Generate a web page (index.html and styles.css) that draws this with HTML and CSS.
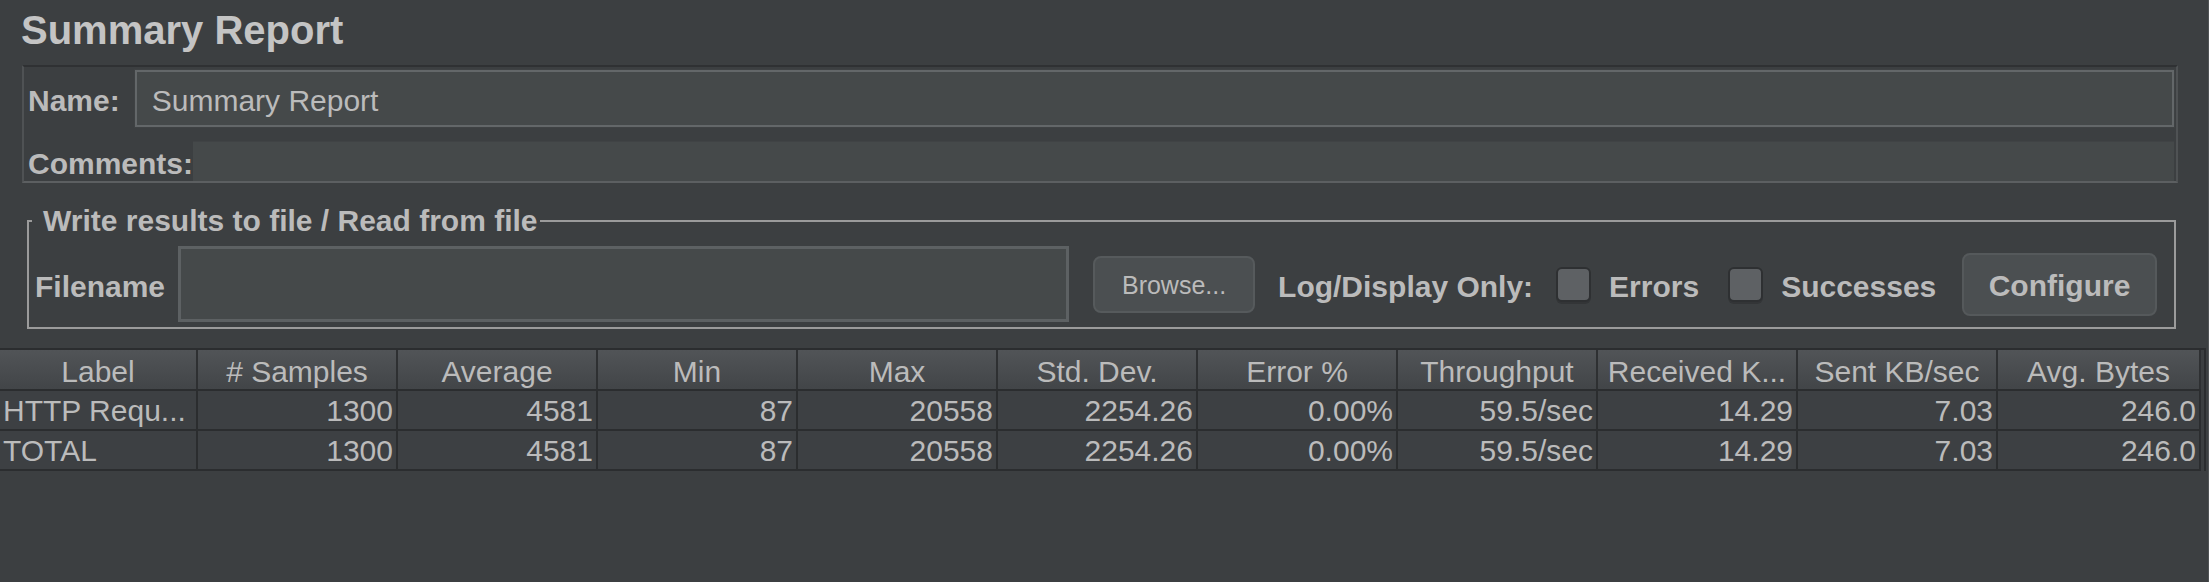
FILE: index.html
```html
<!DOCTYPE html>
<html>
<head>
<meta charset="utf-8">
<title>Summary Report</title>
<link rel="stylesheet" href="styles.css">
</head>
<body>
<div class="app">
  <h1 class="title">Summary Report</h1>

  <div class="name-panel">
    <div class="row name-row">
      <span class="lbl name-lbl">Name:</span>
      <div class="field name-field">Summary Report</div>
    </div>
    <div class="row comments-row">
      <span class="lbl">Comments:</span>
      <div class="field comments-field"></div>
    </div>
  </div>

  <fieldset class="group">
    <legend class="group-title">Write results to file / Read from file</legend>
    <div class="group-row">
      <span class="lbl file-lbl">Filename</span>
      <div class="field file-field"></div>
      <button class="btn browse">Browse...</button>
      <span class="lbl log-lbl">Log/Display Only:</span>
      <span class="box box-errors"></span>
      <span class="lbl check-lbl">Errors</span>
      <span class="box box-success"></span>
      <span class="lbl check-lbl">Successes</span>
      <button class="btn configure">Configure</button>
    </div>
  </fieldset>

  <div class="table-wrap">
    <table class="results">
      <colgroup>
        <col class="c-first"><col class="c"><col class="c"><col class="c"><col class="c"><col class="c"><col class="c"><col class="c"><col class="c"><col class="c"><col class="c-last">
      </colgroup>
      <thead>
        <tr>
          <th>Label</th><th># Samples</th><th>Average</th><th>Min</th><th>Max</th><th>Std. Dev.</th><th>Error %</th><th>Throughput</th><th>Received K...</th><th>Sent KB/sec</th><th>Avg. Bytes</th>
        </tr>
      </thead>
      <tbody>
        <tr>
          <td class="txt">HTTP Requ...</td><td>1300</td><td>4581</td><td>87</td><td>20558</td><td>2254.26</td><td>0.00%</td><td>59.5/sec</td><td>14.29</td><td>7.03</td><td>246.0</td>
        </tr>
        <tr>
          <td class="txt">TOTAL</td><td>1300</td><td>4581</td><td>87</td><td>20558</td><td>2254.26</td><td>0.00%</td><td>59.5/sec</td><td>14.29</td><td>7.03</td><td>246.0</td>
        </tr>
      </tbody>
    </table>
  </div>
</div>
</body>
</html>
```

FILE: styles.css
```css
* { box-sizing: border-box; }

html, body {
  margin: 0;
  padding: 0;
  background: #3c3f41;
}

body {
  width: 2209px;
  height: 582px;
  overflow: hidden;
  font-family: "Liberation Sans", Arial, sans-serif;
  color: #bbbbbb;
}

.app {
  height: 582px;
  border-right: 1px solid #505355;
}

.title {
  margin: 0;
  padding: 10px 0 0 21px;
  height: 49px;
  font-size: 40px;
  line-height: 40px;
  font-weight: bold;
  color: #c4c4c4;
}

.lbl {
  font-size: 30px;
  line-height: 34px;
  padding-top: 5px;
  font-weight: bold;
  color: #bbbbbb;
  white-space: nowrap;
}

.field {
  background: #45494a;
}

/* Name / Comments panel */
.name-panel {
  margin: 16px 30px 0 22px;
  border: 2px solid #4f5254;
  border-top-color: #2f3133;
  border-bottom-color: #5c5f61;
  padding: 3px 2px 0 4px;
}

.row {
  display: flex;
  align-items: center;
}

.name-row {
  height: 57px;
}

.name-lbl {
  margin-right: 15px;
}

.name-field {
  flex: 1;
  height: 57px;
  border: 2px solid #636769;
  box-shadow: 0 0 0 1px #3f4244;
  padding: 5px 0 0 15px;
  font-size: 30px;
  line-height: 48px;
  color: #bbbbbb;
}

.comments-row {
  height: 40px;
  margin-top: 14px;
}

.comments-field {
  flex: 1;
  height: 40px;
  border-top: 1px solid #404345;
}

/* Write results group */
.group {
  margin: 23px 32px 0 27px;
  padding: 0;
  border: 2px solid #9b9b9b;
  min-width: 0;
}

.group-title {
  margin-left: 3px;
  padding: 0 2px 0 11px;
  font-size: 30px;
  line-height: 30px;
  font-weight: bold;
  color: #bbbbbb;
}

.group-row {
  display: flex;
  align-items: center;
  padding: 10px 17px 5px 6px;
}

.file-lbl {
  margin-right: 13px;
}

.file-field {
  width: 891px;
  height: 76px;
  border: 3px solid #5d6163;
}

.btn {
  font-family: "Liberation Sans", Arial, sans-serif;
  background: #4b4f51;
  border: 2px solid #565a5c;
  border-radius: 8px;
  color: #bbbbbb;
  padding: 0;
}

.browse {
  margin-left: 24px;
  width: 162px;
  height: 57px;
  padding-top: 3px;
  font-size: 25px;
  font-weight: normal;
}

.log-lbl {
  margin-left: 23px;
}

.box {
  width: 35px;
  height: 35px;
  border: 2px solid #2e3032;
  border-radius: 6px;
  background: #5e6164;
  box-shadow: 0 2px 0 #333537;
  flex-shrink: 0;
}

.box-errors {
  margin-left: 23px;
}

.box-success {
  margin-left: 29px;
}

.check-lbl {
  margin-left: 18px;
}

.configure {
  margin-left: auto;
  width: 195px;
  height: 63px;
  padding-top: 4px;
  font-size: 30px;
  font-weight: bold;
  border-color: #55595b;
}

/* Table */
.table-wrap {
  margin-top: 19px;
  width: 2206px;
  border-top: 2px solid #2b2d2f;
  border-right: 2px solid #2b2d2f;
}

.results {
  width: 2200px;
  table-layout: fixed;
  border-collapse: collapse;
  font-size: 30px;
}

.c-first { width: 197px; }
.c { width: 200px; }
.c-last { width: 203px; }

.results th {
  height: 40px;
  padding: 3px 3px 0;
  font-weight: normal;
  text-align: center;
  line-height: 35px;
  color: #bbbbbb;
  background: linear-gradient(#515457, #424548);
  border-right: 2px solid #2e3032;
  border-bottom: 2px solid #2b2d2f;
  white-space: nowrap;
  overflow: hidden;
}

.results td {
  height: 40px;
  padding: 2px 3px 0;
  text-align: right;
  line-height: 36px;
  color: #bbbbbb;
  background: #3d4043;
  border-right: 2px solid #2b2d2f;
  border-bottom: 2px solid #2b2d2f;
  white-space: nowrap;
  overflow: hidden;
}

.results td.txt {
  text-align: left;
}
```
